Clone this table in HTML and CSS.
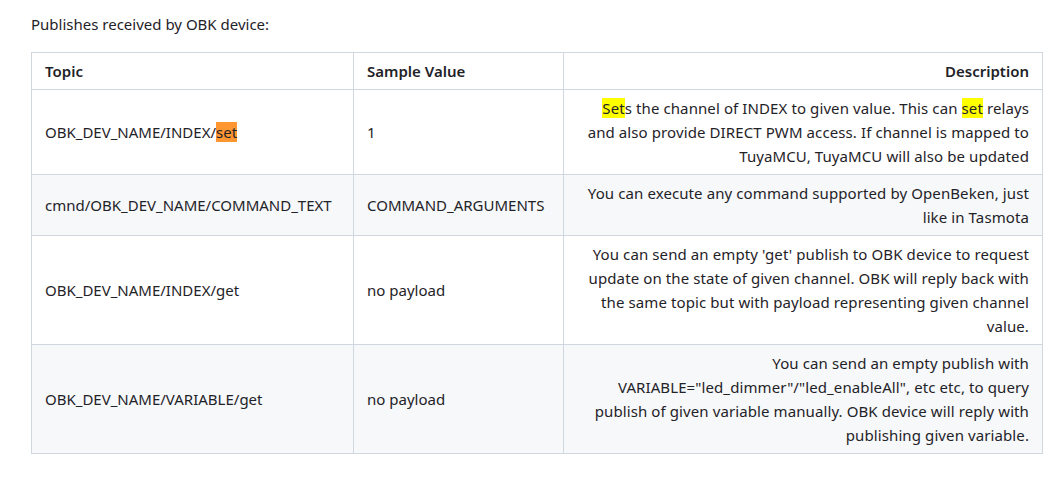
FILE: index.html
```html
<!DOCTYPE html>
<html>
<head>
<meta charset="utf-8">
<link rel="stylesheet" href="styles.css">
</head>
<body>
<div class="markdown">
  <p class="intro">Publishes received by OBK device:</p>
  <table class="topics">
    <colgroup>
      <col class="c-topic">
      <col class="c-sample">
      <col class="c-desc">
    </colgroup>
    <thead>
      <tr>
        <th class="left">Topic</th>
        <th class="left">Sample Value</th>
        <th class="right">Description</th>
      </tr>
    </thead>
    <tbody>
      <tr>
        <td>OBK_DEV_NAME/INDEX/<mark class="hl-active">set</mark></td>
        <td>1</td>
        <td class="right desc"><mark class="hl">Set</mark>s the channel of INDEX to given value. This can <mark class="hl">set</mark> relays and also provide DIRECT PWM access. If channel is mapped to TuyaMCU, TuyaMCU will also be updated</td>
      </tr>
      <tr>
        <td>cmnd/OBK_DEV_NAME/COMMAND_TEXT</td>
        <td>COMMAND_ARGUMENTS</td>
        <td class="right desc">You can execute any command supported by OpenBeken, just like in Tasmota</td>
      </tr>
      <tr>
        <td>OBK_DEV_NAME/INDEX/get</td>
        <td>no payload</td>
        <td class="right desc">You can send an empty 'get' publish to OBK device to request update on the state of given channel. OBK will reply back with the same topic but with payload representing given channel value.</td>
      </tr>
      <tr>
        <td>OBK_DEV_NAME/VARIABLE/get</td>
        <td>no payload</td>
        <td class="right desc">You can send an empty publish with VARIABLE="led_dimmer"/"led_enableAll", etc etc, to query publish of given variable manually. OBK device will reply with publishing given variable.</td>
      </tr>
    </tbody>
  </table>
</div>
</body>
</html>
```

FILE: styles.css
```css
html, body {
  margin: 0;
  padding: 0;
  background: #ffffff;
}

.markdown {
  padding: 12px 0 0 31px;
  font-family: "Noto Sans", "Open Sans", sans-serif;
  font-size: 15px;
  line-height: 24px;
  color: #1f2328;
}

.intro {
  margin: 0 0 16px 0;
}

.topics {
  border-collapse: collapse;
  border-spacing: 0;
  table-layout: fixed;
  width: 1011px;
}

.c-topic { width: 322px; }
.c-sample { width: 210px; }
.c-desc { width: 479px; }

.topics th,
.topics td {
  border: 1px solid #d0d7de;
  padding: 6px 13px;
  vertical-align: middle;
}

.topics th {
  font-weight: 600;
}

.topics tbody tr:nth-child(2n+1) {
  background: #ffffff;
}

.topics tbody tr:nth-child(2n) {
  background: #f6f8fa;
}

.left { text-align: left; }
.right { text-align: right; }

.desc {
  letter-spacing: 0.1px;
}

.hl {
  background: #ffff00;
  color: inherit;
}

.hl-active {
  background: #ff9632;
  color: inherit;
}
```
